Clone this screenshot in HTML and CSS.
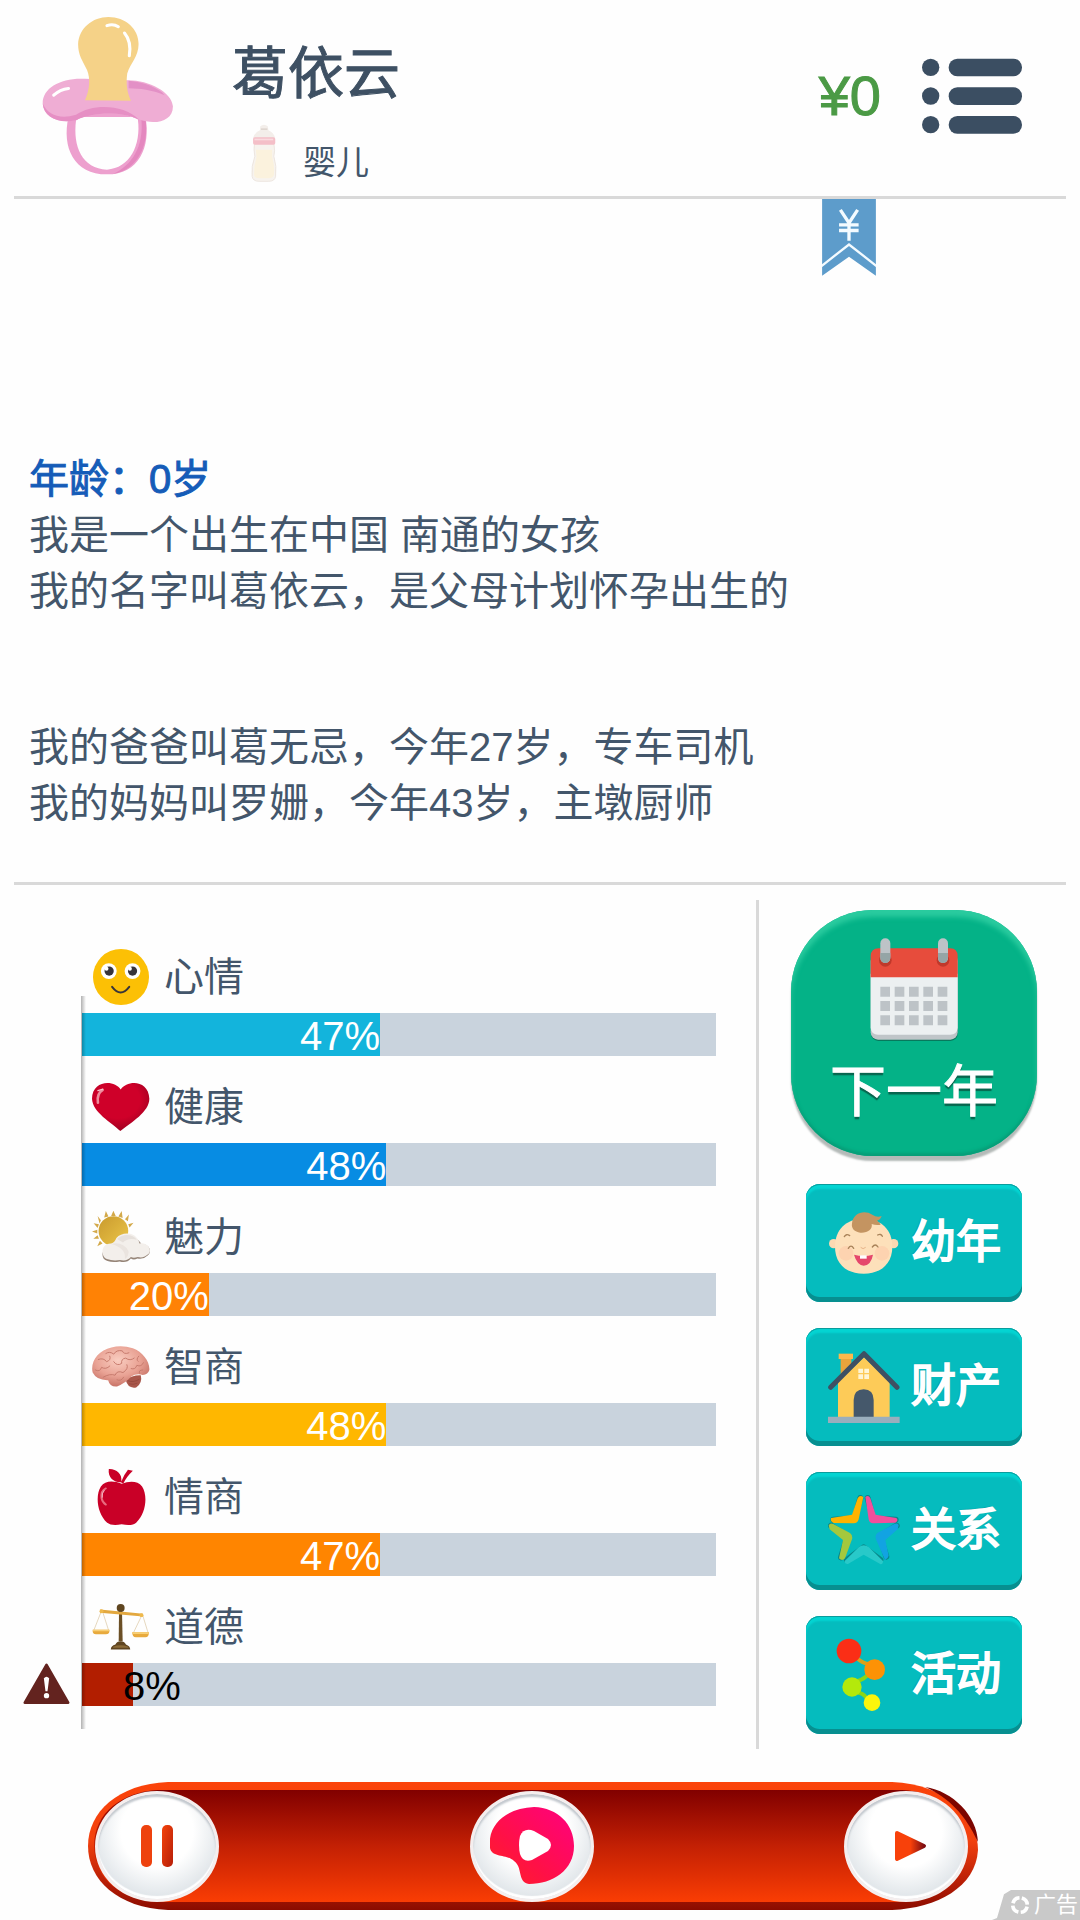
FILE: index.html
```html
<!DOCTYPE html>
<html lang="zh-CN">
<head>
  <meta charset="UTF-8">
  <meta name="viewport" content="width=device-width, initial-scale=1.0">
  <title>葛依云</title>
  <link rel="stylesheet" href="styles.css">
</head>
<body>
  <header class="header">
    <!-- 奶嘴头像 -->
    <svg class="avatar" viewBox="120 45 390 485" preserveAspectRatio="none" aria-hidden="true">
      <path fill="#eda0ce" fill-rule="evenodd" d="M200 350C180 440 215 522 312 522C405 522 440 440 424 350ZM222 360C212 440 240 504 312 508C378 504 412 435 402 358C350 330 275 330 222 360Z"/>
      <path fill="#e488bf" d="M424 355C436 435 400 510 330 521C385 495 420 440 412 355Z"/>
      <path fill="#efadd4" d="M248 236C180 232 124 262 125 310C128 350 170 372 222 360C270 336 350 332 405 358C450 374 504 366 504 318C500 275 435 240 374 240Z"/>
      <path fill="#e68fc4" d="M125 310C128 350 170 372 222 360C270 336 350 332 405 358C360 312 270 310 222 344C175 358 140 345 125 310Z"/>
      <path fill="#e390c6" d="M375 242C420 245 465 265 480 285C440 268 410 265 375 264Z"/>
      <path fill="#f5d288" d="M248 300C262 270 264 235 254 210C240 180 228 165 228 132C230 85 270 51 316 51C366 51 404 86 404 132C404 170 380 190 371 220C367 250 370 275 382 302Z"/>
      <path fill="none" stroke="#fff" stroke-width="9" stroke-linecap="round" d="M312 77Q330 70 345 80M363 99Q384 125 377 167"/>
      <path fill="none" stroke="#fff" stroke-width="9" stroke-linecap="round" d="M157 285Q175 268 200 265"/>
    </svg>
    <div class="profile">
      <h1 class="name">葛依云</h1>
      <div class="stage">
        <svg class="bottle" viewBox="722 370 88 180" preserveAspectRatio="none" aria-hidden="true">
          <path fill="#f3eeea" d="M755 380Q766 370 777 380L779 392Q796 400 798 415H734Q738 398 754 392Z"/>
          <path fill="#dfd7d1" d="M757 386H776V391H757Z"/>
          <path fill="#f7f3ee" stroke="#e6ddd5" stroke-width="2" d="M738 430H795Q799 455 795 470Q804 500 800 530Q798 545 780 545H752Q733 545 731 530Q728 500 739 470Q735 450 738 430Z"/>
          <path fill="#fbf2dd" d="M742 450H790V472Q798 500 795 526Q792 536 778 536H755Q738 536 737 526Q736 500 744 472Z"/>
          <rect x="734" y="413" width="65" height="22" rx="5" fill="#f4bfc8"/>
          <rect x="738" y="417" width="55" height="5" fill="#fadadf"/>
        </svg>
        <span class="stage-name">婴儿</span>
      </div>
    </div>
    <span class="money">¥0</span>
    <button class="menu" type="button" aria-label="菜单">
      <svg class="menu-icon" viewBox="486 113 300 228" aria-hidden="true">
        <g fill="#3b4e62">
          <circle cx="512" cy="141" r="26"/>
          <circle cx="512" cy="227" r="26"/>
          <circle cx="512" cy="313" r="26"/>
          <rect x="566" y="115" width="220" height="53" rx="26"/>
          <rect x="566" y="201" width="220" height="53" rx="26"/>
          <rect x="566" y="287" width="220" height="53" rx="26"/>
        </g>
      </svg>
    </button>
  </header>

  <main>
    <section class="story">
      <a class="ribbon" href="#" aria-label="钱包">
        <svg class="ribbon-icon" viewBox="185 538 162 232" aria-hidden="true">
          <path fill="#5d9ccb" d="M185 538H347V769L266 712L185 769Z"/>
          <path fill="none" stroke="#f4fbff" stroke-width="7" d="M183 740L266 675L349 740"/>
          <path fill="none" stroke="#f4fbff" stroke-width="10" d="M240 571L266 610L292 571M266 606V664M236 616H295M236 633H295"/>
        </svg>
      </a>
      <h2 class="age">年龄：0岁</h2>
      <p>我是一个出生在中国 南通的女孩</p>
      <p>我的名字叫葛依云，是父母计划怀孕出生的</p>
      <p class="family">我的爸爸叫葛无忌，今年27岁，专车司机</p>
      <p>我的妈妈叫罗姗，今年43岁，主墩厨师</p>
    </section>

    <div class="panel">
      <ul class="stats">
        <li class="stat">
          <div class="stat-label">
            <svg class="stat-icon" viewBox="96 55 176 176" aria-hidden="true">
              <circle cx="184" cy="143" r="85" fill="#fcc005"/>
              <circle cx="147" cy="125" r="24" fill="#fff"/>
              <circle cx="219" cy="125" r="24" fill="#fff"/>
              <circle cx="148" cy="125" r="14" fill="#37343a"/>
              <circle cx="219" cy="125" r="14" fill="#37343a"/>
              <circle cx="140" cy="118" r="6" fill="#fff"/>
              <circle cx="211" cy="118" r="6" fill="#fff"/>
              <path d="M157 173Q183 207 209 173" fill="none" stroke="#37343a" stroke-width="6" stroke-linecap="round"/>
            </svg>
            <span>心情</span>
          </div>
          <div class="bar"><div class="fill mood" style="width: 47%">47%</div></div>
        </li>
        <li class="stat">
          <div class="stat-label">
            <svg class="stat-icon" viewBox="96 445 176 176" aria-hidden="true">
              <defs>
                <radialGradient id="heart" cx="45%" cy="35%" r="70%">
                  <stop offset="55%" stop-color="#cf0029"/>
                  <stop offset="100%" stop-color="#96001f"/>
                </radialGradient>
              </defs>
              <path fill="url(#heart)" d="M183 480C165 450 97 450 96 508C98 550 155 580 182 606C215 580 270 548 270 508C268 450 203 450 183 480Z"/>
              <path fill="none" stroke="#ee8c9c" stroke-width="8" stroke-linecap="round" d="M128 482Q110 492 114 520"/>
              <path fill="none" stroke="#f6c4cc" stroke-width="4" stroke-linecap="round" d="M114 483L129 479"/>
            </svg>
            <span>健康</span>
          </div>
          <div class="bar"><div class="fill health" style="width: 48%">48%</div></div>
        </li>
        <li class="stat">
          <div class="stat-label">
            <svg class="stat-icon" viewBox="96 829 176 176" aria-hidden="true">
              <defs>
                <linearGradient id="sun" x1="0" y1="0" x2="1" y2="1">
                  <stop offset="0%" stop-color="#c99a2e"/>
                  <stop offset="100%" stop-color="#ecc648"/>
                </linearGradient>
              </defs>
              <path fill="#d3a94a" d="M133 858L138 838L146 855ZM154 853L161 837L168 853ZM176 855L186 838L189 859ZM196 863L208 849L205 869ZM206 878L222 874L210 888ZM123 866L113 853L119 876ZM117 878L101 875L113 890ZM112 895L96 900L112 906ZM113 912L100 922L117 922ZM120 928L112 945L128 937Z"/>
              <circle cx="161" cy="899" r="45" fill="url(#sun)"/>
              <path fill="#958477" d="M143 990C122 985 122 955 148 946Q168 938 176 920C190 903 220 905 232 923Q244 933 246 939C268 938 280 958 266 972Q250 987 234 982Q222 988 214 982Q202 997 180 991Q160 995 143 990Z"/>
              <path fill="#f3efeb" d="M141 984C120 975 124 936 154 937Q166 932 170 920C185 902 222 900 236 925Q240 933 240 937C262 930 280 955 268 968Q252 983 235 978Q222 982 214 978Q202 992 181 987Q160 991 141 984Z"/>
              <path fill="#e6e0db" d="M172 923C189 905 221 908 232 925Q205 918 190 934Z"/>
              <path fill="#eae4df" d="M154 938Q190 930 207 960Q208 974 196 984Q200 950 154 938Z"/>
            </svg>
            <span>魅力</span>
          </div>
          <div class="bar"><div class="fill charm" style="width: 20%">20%</div></div>
        </li>
        <li class="stat">
          <div class="stat-label">
            <svg class="stat-icon" viewBox="276 53 176 176" aria-hidden="true">
              <defs>
                <radialGradient id="brain" cx="45%" cy="35%" r="65%">
                  <stop offset="0%" stop-color="#f9cdc0"/>
                  <stop offset="60%" stop-color="#e9a294"/>
                  <stop offset="100%" stop-color="#c87468"/>
                </radialGradient>
              </defs>
              <path fill="#a9574b" d="M378 180Q398 165 424 166Q430 190 410 203Q385 208 378 180Z"/>
              <path fill="url(#brain)" d="M278 158C270 125 295 90 335 82Q365 73 400 84C430 95 452 125 450 150Q446 164 430 165Q410 160 395 170Q378 190 352 200Q330 202 325 181Q290 182 278 158Z"/>
              <g fill="none" stroke="#c67a6d" stroke-width="3" stroke-linecap="round">
                <path d="M286 150Q300 158 305 142Q318 150 330 138M295 118Q312 112 320 125Q335 120 330 108M318 100Q330 92 342 102Q350 88 368 92Q372 104 388 98"/>
                <path d="M310 172Q330 160 346 166Q352 150 370 158Q388 146 382 134M342 125Q352 140 366 130Q364 116 378 114Q392 124 404 114M395 146Q408 150 412 136Q426 142 432 128M418 108Q408 118 416 124M352 180Q364 186 372 172M430 150Q416 150 420 160"/>
              </g>
              <path fill="none" stroke="#8f4439" stroke-width="2" d="M384 182Q400 190 420 178M388 192Q402 196 414 190"/>
            </svg>
            <span>智商</span>
          </div>
          <div class="bar"><div class="fill iq" style="width: 48%">48%</div></div>
        </li>
        <li class="stat">
          <div class="stat-label">
            <svg class="stat-icon" viewBox="276 441 176 176" aria-hidden="true">
              <path fill="#c90027" d="M366 489C340 478 315 480 303 497C285 525 292 580 322 607Q335 618 366 612Q398 618 410 607C440 578 446 525 428 497C415 480 390 480 366 489Z"/>
              <path fill="#c90027" d="M363 484C345 485 323 472 327 444C350 443 368 458 365 482Q372 462 385 446L400 449Q380 468 371 488Z"/>
              <path fill="none" stroke="#e86c80" stroke-width="6" stroke-linecap="round" d="M318 503Q302 510 305 533Q308 546 318 552"/>
              <path fill="none" stroke="#fff" stroke-width="2" stroke-linecap="round" d="M313 509Q305 518 307 530"/>
            </svg>
            <span>情商</span>
          </div>
          <div class="bar"><div class="fill eq" style="width: 47%">47%</div></div>
        </li>
        <li class="stat">
          <div class="stat-label">
            <svg class="stat-icon" viewBox="276 831 176 176" aria-hidden="true">
              <g fill="none" stroke="#d9c39d" stroke-width="2">
                <path d="M304 872L282 928M308 872L326 928M427 884L402 936M430 884L446 936"/>
              </g>
              <path fill="#6b4f26" d="M358 870H367L369 962H357Z"/>
              <path fill="#e3a83f" d="M300 866L431 879V887L300 876Z"/>
              <circle cx="305" cy="871" r="6" fill="#efb94c"/>
              <circle cx="426" cy="883" r="6" fill="#efb94c"/>
              <circle cx="363" cy="861" r="12" fill="#5f4520"/>
              <path fill="#5f4520" d="M333 987Q333 976 347 972Q352 962 363 962Q374 962 379 972Q392 977 392 987Z"/>
              <path fill="#8b6b37" d="M340 979Q362 970 386 979V982H340Z"/>
              <path fill="#e8aa3d" d="M278 927H329Q330 941 318 941H288Q277 941 278 927ZM398 935H449Q449 950 438 950H409Q398 950 398 935Z"/>
              <path fill="#f8cf74" d="M279 927H328V932H279ZM399 935H448V940H399Z"/>
            </svg>
            <span>道德</span>
          </div>
          <div class="bar">
            <svg class="warning" viewBox="68 1028 140 126" aria-hidden="true">
              <path fill="#63231f" stroke="#63231f" stroke-width="8" stroke-linejoin="round" d="M138 1034L203 1147H73Z"/>
              <path fill="#fff" d="M130 1074Q138 1064 146 1074L141 1113H135Z"/>
              <circle cx="138" cy="1126" r="8" fill="#fff"/>
            </svg>
            <div class="fill moral" style="width: 8%">8%</div>
          </div>
        </li>
      </ul>

      <div class="actions">
        <button class="next-year" type="button">
          <svg class="calendar" viewBox="358 140 270 315" aria-hidden="true">
            <rect x="364" y="200" width="260" height="252" rx="22" fill="#08795d"/>
            <rect x="363" y="190" width="261" height="258" rx="22" fill="#bfc5c8"/>
            <path fill="#ecf0f1" d="M363 250H624V412Q622 433 602 433H385Q365 433 363 412Z"/>
            <path fill="#e74c3c" d="M363 261V197Q364 174 387 174H602Q623 174 624 197V261Z"/>
            <g fill="#c0392b"><circle cx="407" cy="210" r="19"/><circle cx="580" cy="210" r="19"/></g>
            <g fill="#bdc3c7"><rect x="392" y="144" width="30" height="74" rx="15"/><rect x="565" y="144" width="30" height="74" rx="15"/></g>
            <path fill="#95a5a6" d="M392 188H422V203Q420 218 407 218Q393 218 392 203ZM565 188H595V203Q593 218 580 218Q566 218 565 203Z"/>
            <path stroke="#bdc3c7" stroke-width="30" stroke-dasharray="29 14" d="M392 304H595M392 347H595M392 390H595"/>
          </svg>
          <span class="next-text">下一年</span>
        </button>

        <button class="action" type="button">
          <svg class="action-icon" viewBox="115 108 216 222" aria-hidden="true">
            <circle cx="132" cy="221" r="14" fill="#fbd9b2"/>
            <circle cx="312" cy="221" r="14" fill="#fbd9b2"/>
            <path fill="#fde0ba" d="M222 146C275 146 308 180 308 230C308 280 275 311 222 311C168 311 136 280 136 230C136 180 168 146 222 146Z"/>
            <circle cx="169" cy="250" r="22" fill="#fdd3b0"/>
            <circle cx="277" cy="250" r="22" fill="#fdd3b0"/>
            <path fill="#c49461" d="M187 160C190 128 225 118 248 134Q262 144 276 138Q272 150 262 152Q270 157 273 164Q258 166 246 162C250 178 232 190 212 188C195 186 184 176 187 160Z"/>
            <g fill="none" stroke="#a9835a" stroke-width="4" stroke-linecap="round">
              <path d="M164 200Q170 190 180 197M264 195Q274 190 278 199M176 235Q184 222 192 235M248 231Q257 219 265 231"/>
            </g>
            <path fill="none" stroke="#e8b489" stroke-width="3" d="M213 232Q220 240 228 232"/>
            <path fill="#e5476c" d="M193 254Q222 262 250 254Q244 286 222 287Q202 285 193 254Z"/>
            <path fill="#fff" d="M211 256H231V266H211Z"/>
          </svg>
          <span>幼年</span>
        </button>
        <button class="action" type="button">
          <svg class="action-icon" viewBox="115 540 216 222" aria-hidden="true">
            <path fill="#e9a43b" d="M153 562H185V610L153 635Z"/>
            <path fill="#fdb84b" d="M147 551H190V567H147Z"/>
            <path fill="#fdcb58" d="M145 636L223 562L300 636V742H145Z"/>
            <path fill="none" stroke="#3e5063" stroke-width="15" stroke-linecap="round" stroke-linejoin="round" d="M123 652L223 551L322 652"/>
            <path fill="#45586b" d="M192 742V690Q193 658 222 658Q251 658 252 690V742Z"/>
            <path fill="#fff5d4" d="M206 596H220V609H206ZM224 596H238V609H224ZM206 613H220V627H206ZM224 613H238V627H224Z"/>
            <path fill="#9aaebd" d="M115 740H330V759H115Z"/>
          </svg>
          <span>财产</span>
        </button>
        <button class="action" type="button">
          <svg class="action-icon" viewBox="115 132 216 222" aria-hidden="true">
            <g fill="none" stroke="#08888a" stroke-width="18" stroke-linecap="round" stroke-linejoin="round">
              <path d="M212 144L195 205L131 209M234 144L250 205L318 209M124 227L174 258L154 322M321 227L271 258L290 320M172 330L222 292L272 330"/>
            </g>
            <path fill="#ffb300" d="M204 145Q210 134 221 141L207 208Q204 220 192 220L132 219Q121 214 124 204L187 194Z"/>
            <path fill="#f24f9c" d="M227 141Q236 134 242 145L258 194L320 204Q328 211 317 218L251 220Q239 220 237 208Z"/>
            <path fill="#a4c83e" d="M117 227Q120 218 131 222L181 249Q190 256 187 268L166 325Q158 335 148 325L160 270L120 238Z"/>
            <path fill="#12a3e2" d="M327 225Q322 218 314 222L263 249Q255 256 259 268L286 330Q295 325 297 317L287 270L324 238Z"/>
            <path fill="#28c9c9" d="M165 333L207 292Q222 280 238 292L280 333Q281 342 273 343L222 314L175 342Q165 343 165 333Z"/>
          </svg>
          <span>关系</span>
        </button>
        <button class="action" type="button">
          <svg class="action-icon" viewBox="115 564 216 222" aria-hidden="true">
            <path fill="none" stroke="#d9a21a" stroke-width="12" d="M200 622Q220 642 240 642"/>
            <path fill="none" stroke="#8bd616" stroke-width="12" d="M232 677Q215 692 195 695M204 728Q220 728 232 745"/>
            <circle cx="178" cy="603" r="37" fill="#fb2e16"/>
            <circle cx="255" cy="659" r="31" fill="#fd9205"/>
            <circle cx="187" cy="711" r="29" fill="#b4e90b"/>
            <circle cx="247" cy="758" r="25" fill="#fbf50b"/>
          </svg>
          <span>活动</span>
        </button>
      </div>
    </div>
  </main>

  <nav class="player">
    <svg class="player-bg" viewBox="0 0 892 128" preserveAspectRatio="none" aria-hidden="true">
      <defs>
        <linearGradient id="rim" x1="0" y1="0" x2="0" y2="1">
          <stop offset="0%" stop-color="#fb430a"/>
          <stop offset="45%" stop-color="#f3410e"/>
          <stop offset="80%" stop-color="#b51c05"/>
          <stop offset="100%" stop-color="#8a0c00"/>
        </linearGradient>
        <linearGradient id="track" x1="0" y1="0" x2="0" y2="1">
          <stop offset="0%" stop-color="#810000"/>
          <stop offset="50%" stop-color="#c32004"/>
          <stop offset="100%" stop-color="#fa3d04"/>
        </linearGradient>
      </defs>
      <path fill="url(#rim)" d="M80 0H805C860 2 891 36 891 68C889 105 850 126 805 128H80C30 126 0 98 0 64C0 30 30 2 80 0Z"/>
      <path fill="#7d0500" d="M838 5C866 9 890 34 891 60C878 32 862 16 838 5Z"/>
      <path fill="url(#track)" d="M70 8H815C850 10 880 30 880 64C880 98 850 118 815 120H70C35 118 6 98 6 64C6 30 35 10 70 8Z"/>
    </svg>
    <div class="controls">
      <button class="knob" type="button" aria-label="暂停">
        <svg class="knob-icon" viewBox="0 0 84 84" aria-hidden="true">
          <defs>
            <linearGradient id="pause" x1="0" y1="0" x2="1" y2="1">
              <stop offset="0%" stop-color="#f4430b"/>
              <stop offset="100%" stop-color="#b61e09"/>
            </linearGradient>
          </defs>
          <rect x="26" y="21" width="11" height="42" rx="5" fill="#ee420e"/>
          <rect x="47" y="21" width="11" height="42" rx="5" fill="url(#pause)"/>
        </svg>
      </button>
      <button class="knob" type="button" aria-label="视频">
        <svg class="knob-icon" viewBox="0 0 84 84" aria-hidden="true">
          <defs>
            <linearGradient id="video" x1="1" y1="0" x2="0" y2="1">
              <stop offset="0%" stop-color="#ff0080"/>
              <stop offset="60%" stop-color="#ff1047"/>
              <stop offset="100%" stop-color="#ff2222"/>
            </linearGradient>
          </defs>
          <path fill="url(#video)" d="M0 44C-3 20 17 4 44 3C68 4 84 20 84 42C84 66 63 80 39 80C27 78 33 63 24 57C17 50 2 54 0 44Z"/>
          <path fill="#fff" d="M30 32Q34 23 44 27L58 35Q64 41 58 47L42 56Q33 59 30 50Q28 41 30 32Z"/>
        </svg>
      </button>
      <button class="knob" type="button" aria-label="播放">
        <svg class="knob-icon" viewBox="0 0 84 84" aria-hidden="true">
          <defs>
            <linearGradient id="play">
              <stop offset="50%" stop-color="#f8410a"/>
              <stop offset="100%" stop-color="#7d0d12"/>
            </linearGradient>
          </defs>
          <path fill="url(#play)" stroke="url(#play)" stroke-width="4" stroke-linejoin="round" d="M33 29L60 42L33 55Z"/>
        </svg>
      </button>
    </div>
  </nav>

  <a class="ad" href="#">
    <svg class="ad-icon" viewBox="0 0 22 22" aria-hidden="true">
      <circle cx="11" cy="11" r="8" fill="none" stroke="#fff" stroke-width="4" stroke-dasharray="10 2.6" transform="rotate(12 11 11)"/>
    </svg>
    <span>广告</span>
  </a>
</body>
</html>
```
FILE: styles.css
```css
:root {
  --text-color: #43566b;
  --line-color: #d9d9d9;
  --bar-color: #c9d3dd;
  --button-color: #05bcbe;
}

* {
  box-sizing: border-box;
}

body {
  position: relative;
  margin: 0;
  min-height: 100vh;
  background-color: #fefefe;
  color: var(--text-color);
  font-family: "Liberation Sans", "Noto Sans CJK SC", sans-serif;
  font-size: 40px;
  line-height: 56px;
}

h1,
h2,
p,
ul {
  margin: 0;
  padding: 0;
}

svg {
  display: block;
  flex: none;
}

button {
  padding: 0;
  border: none;
  background: none;
  font-family: inherit;
  cursor: pointer;
}

/* 顶部 */
.header {
  display: flex;
  align-items: center;
  height: 199px;
  margin: 0 14px;
  padding: 0 44px 5px 27px;
  border-bottom: 3px solid var(--line-color);
}

.avatar {
  width: 134px;
  height: 162px;
}

.profile {
  flex: 1;
  align-self: flex-end;
  margin-left: 57px;
  padding-bottom: 8px;
}

.name {
  margin-bottom: 17px;
  color: #3e5063;
  font-size: 56px;
  font-weight: 400;
  line-height: 64px;
  -webkit-text-stroke: 1px currentColor;
}

.stage {
  display: flex;
  align-items: flex-end;
  gap: 24px;
  padding-left: 17px;
}

.bottle {
  width: 30px;
  height: 60px;
}

.stage-name {
  font-size: 33px;
  line-height: 40px;
}

.money {
  margin-right: 41px;
  color: #4b9a45;
  font-size: 56px;
  -webkit-text-stroke: 1px currentColor;
}

.menu-icon {
  width: 100px;
  height: 76px;
}

/* 人生经历 */
.story {
  position: relative;
  margin: 0 14px;
  padding: 252px 15px 51px;
  border-bottom: 3px solid var(--line-color);
}

.ribbon {
  position: absolute;
  top: 0;
  right: 190px;
}

.ribbon-icon {
  width: 54px;
  height: 77px;
}

.age {
  color: #155cb8;
  font-size: 40px;
  font-weight: 400;
  -webkit-text-stroke: 1px currentColor;
}

.family {
  margin-top: 100px;
}

/* 属性 */
.panel {
  display: grid;
  grid-template-columns: 7fr 3fr;
  padding-top: 15px;
}

.stats {
  position: relative;
  padding: 26px 40px 0 82px;
  list-style: none;
}

.stats::after {
  content: "";
  position: absolute;
  top: 96px;
  bottom: 20px;
  left: 81px;
  width: 5px;
  background: linear-gradient(to right, rgba(0, 0, 0, 0.3), rgba(0, 0, 0, 0));
}

.stat-label {
  display: flex;
  align-items: center;
  gap: 14px;
  height: 87px;
  padding: 15px 0 0 10px;
}

.stat-icon {
  width: 58px;
  height: 58px;
}

.bar {
  position: relative;
  height: 43px;
  background-color: var(--bar-color);
}

.fill {
  height: 100%;
  color: #fff;
  line-height: 46px;
  text-align: right;
  white-space: nowrap;
}

.mood {
  background-color: #13b4dc;
}

.health {
  background-color: #078ce3;
}

.charm {
  background-color: #ff8205;
}

.iq {
  background-color: #ffb700;
}

.eq {
  background-color: #ff8500;
}

.moral {
  padding-left: 41px;
  background-color: #b21e00;
  color: #000;
  text-align: left;
}

.warning {
  position: absolute;
  top: 0;
  right: 100%;
  width: 47px;
  height: 42px;
  margin-right: 12px;
}

/* 操作按钮 */
.actions {
  display: flex;
  flex-direction: column;
  align-items: center;
  gap: 26px;
  padding: 10px 11px 15px 0;
  border-left: 3px solid var(--line-color);
}

.next-year {
  display: flex;
  flex-direction: column;
  align-items: center;
  width: 246px;
  height: 246px;
  margin-bottom: 2px;
  padding-top: 27px;
  border-radius: 82px;
  background-color: #04b287;
  box-shadow: 0 5px 2px #b4bab8, inset 0 7px 5px #2acb9f, inset 0 -3px 3px #079e78;
  color: #fff;
}

.calendar {
  width: 90px;
  height: 105px;
}

.next-text {
  margin-top: 18px;
  font-size: 56px;
  line-height: 64px;
  text-shadow: 0 3px 1px #08654e;
  -webkit-text-stroke: 1px currentColor;
}

.action {
  display: flex;
  align-items: center;
  gap: 11px;
  width: 216px;
  height: 118px;
  padding-left: 22px;
  border-radius: 14px;
  background-color: var(--button-color);
  box-shadow: inset 0 -5px 0 #078f90, inset 0 1px 0 #0a9c9c, inset 0 5px 2px #04d4d2;
  color: #fff;
  font-size: 45px;
  line-height: 56px;
  text-shadow: -1px -1px 1px #067b7c;
  -webkit-text-stroke: 2px currentColor;
}

.action-icon {
  width: 72px;
  height: 74px;
}

/* 底部播放条 */
.player {
  display: grid;
  height: 128px;
  margin: 33px 101px 10px 88px;
}

.player-bg,
.controls {
  grid-area: 1 / 1;
  width: 100%;
  height: 128px;
}

.controls {
  display: flex;
  align-items: center;
  justify-content: space-between;
  padding: 0 11px 0 7px;
  z-index: 1;
}

.knob {
  display: flex;
  align-items: center;
  justify-content: center;
  width: 124px;
  height: 111px;
  border: 3px solid #f5eeee;
  border-radius: 50%;
  background: radial-gradient(circle at 50% 35%, #fff 40%, #c8d1d8 100%);
  box-shadow: inset 0 3px 2px #c3c8ce, inset 0 -3px 1px #fff;
}

.knob-icon {
  width: 84px;
  height: 84px;
}

/* 广告角标 */
.ad {
  position: absolute;
  right: 0;
  bottom: 0;
  display: flex;
  align-items: center;
  gap: 4px;
  height: 30px;
  padding: 0 2px 0 18px;
  background-color: #c9c9c9;
  clip-path: polygon(0 100%, 5px 93%, 12px 14%, 19px 0, 100% 0, 100% 100%);
  color: #fff;
  font-size: 22px;
  line-height: 30px;
  text-decoration: none;
}

.ad-icon {
  width: 20px;
  height: 20px;
}
```
